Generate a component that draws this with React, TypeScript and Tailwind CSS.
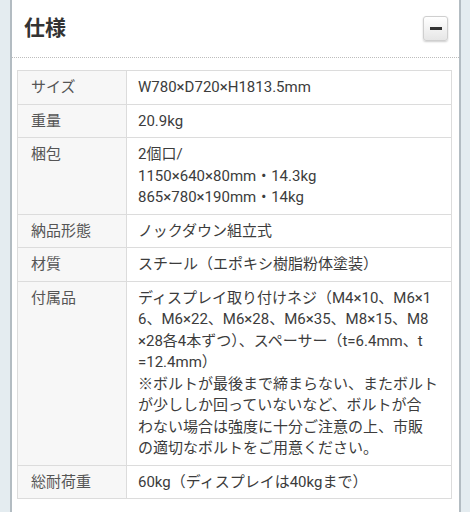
import React, { ReactElement } from "react";

type Row = { label: string; lines: string[] };

const rows: Row[] = [
  { label: "サイズ", lines: ["W780×D720×H1813.5mm"] },
  { label: "重量", lines: ["20.9kg"] },
  {
    label: "梱包",
    lines: ["2個口/", "1150×640×80mm・14.3kg", "865×780×190mm・14kg"],
  },
  { label: "納品形態", lines: ["ノックダウン組立式"] },
  { label: "材質", lines: ["スチール（エポキシ樹脂粉体塗装）"] },
  {
    label: "付属品",
    lines: [
      "ディスプレイ取り付けネジ（M4×10、M6×1",
      "6、M6×22、M6×28、M6×35、M8×15、M8",
      "×28各4本ずつ）、スペーサー（t=6.4mm、t",
      "=12.4mm）",
      "※ボルトが最後まで締まらない、またボルト",
      "が少ししか回っていないなど、ボルトが合",
      "わない場合は強度に十分ご注意の上、市販",
      "の適切なボルトをご用意ください。",
    ],
  },
  { label: "総耐荷重", lines: ["60kg（ディスプレイは40kgまで）"] },
];

function SpecRow({ row, first }: { row: Row; first: boolean }): ReactElement {
  return (
    <div className={`flex ${first ? "" : "border-t border-[#dcdcdc]"}`}>
      <div className="w-[109px] shrink-0 bg-[#f7f7f7] border-r border-[#dcdcdc] pl-[13px] pt-[6px] pb-[5px] text-[#555]">
        {row.label}
      </div>
      <div className="flex-1 pl-[11px] pt-[6px] pb-[5px] text-[#3c3c3c]">
        {row.lines.map((l, i) => (
          <div key={i} className="whitespace-nowrap">
            {l}
          </div>
        ))}
      </div>
    </div>
  );
}

export default function App(): ReactElement {
  return (
    <div className="w-[470px] h-[512px] overflow-hidden bg-[#e4ecf0] pl-[10px] pr-[9px] font-['Roboto','Noto_Sans_CJK_JP',sans-serif]">
      <div className="h-full bg-white border-x-2 border-[#b3bcc2]">
        <div className="h-[58px] flex items-center justify-between pl-[12px] pr-[11px] border-b border-dotted border-[#bdbdbd]">
          <h2 className="text-[21px] font-bold text-[#333] leading-none">仕様</h2>
          <button className="w-[25px] h-[25px] rounded-[3px] border border-[#cfcfcf] bg-gradient-to-b from-white to-[#e6e6e6] shadow-[0_1px_2px_rgba(0,0,0,0.2)] flex items-center justify-center">
            <span className="block w-[12px] h-[3px] bg-[#333]" />
          </button>
        </div>
        <div className="mt-[12px] ml-[5px] mr-[7px] border border-[#dcdcdc] text-[15px] leading-[21.5px]">
          {rows.map((r, i) => (
            <SpecRow key={r.label} row={r} first={i === 0} />
          ))}
        </div>
      </div>
    </div>
  );
}
